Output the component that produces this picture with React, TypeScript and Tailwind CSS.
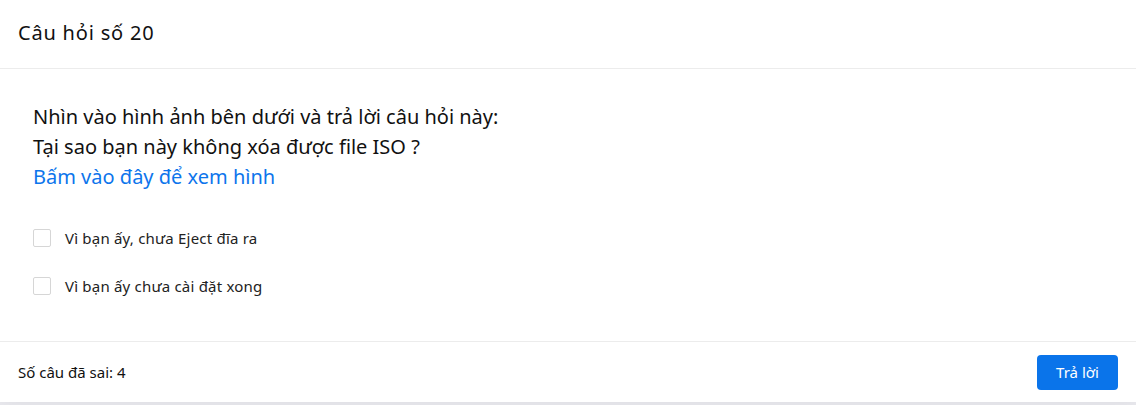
import React from 'react';

const options = ['Vì bạn ấy, chưa Eject đĩa ra', 'Vì bạn ấy chưa cài đặt xong'];

export default function App() {
  return (
    <div className="min-h-[405px] bg-[#e9e9ee]" style={{ fontFamily: '"Noto Sans", sans-serif' }}>
      <div className="bg-white h-[402px] flex flex-col shadow-[0_0_18px_rgba(0,0,0,0.06)]">
        <div className="h-[69px] border-b border-[#ececec] flex items-center px-[18px] pb-[2px]">
          <h1 className="text-[20px] tracking-[0.8px] text-[#111] leading-none">Câu hỏi số 20</h1>
        </div>

        <div className="flex-1 px-[33px] pt-[33px]">
          <div className="text-[20px] leading-[30px] text-[#111]">
            <p>Nhìn vào hình ảnh bên dưới và trả lời câu hỏi này:</p>
            <p>Tại sao bạn này không xóa được file ISO ?</p>
            <a href="#" className="text-[#0d75ec]">Bấm vào đây để xem hình</a>
          </div>

          <div className="mt-[37px] flex flex-col gap-[30px]">
            {options.map((opt) => (
              <label key={opt} className="h-[18px] flex items-center gap-[14px] text-[15px] tracking-[0.2px] text-[#222]">
                <span className="w-[18px] h-[18px] border border-[#d6d6d6] rounded-[2px] bg-white" />
                {opt}
              </label>
            ))}
          </div>
        </div>

        <div className="h-[61px] border-t border-[#ececec] flex items-center justify-between pl-[18px] pr-[18px]">
          <span className="text-[15px] text-[#111]">Số câu đã sai: 4</span>
          <button className="w-[81px] h-[35px] rounded-[4px] bg-[#0a74ea] text-white text-[15px]">Trả lời</button>
        </div>
      </div>
    </div>
  );
}
